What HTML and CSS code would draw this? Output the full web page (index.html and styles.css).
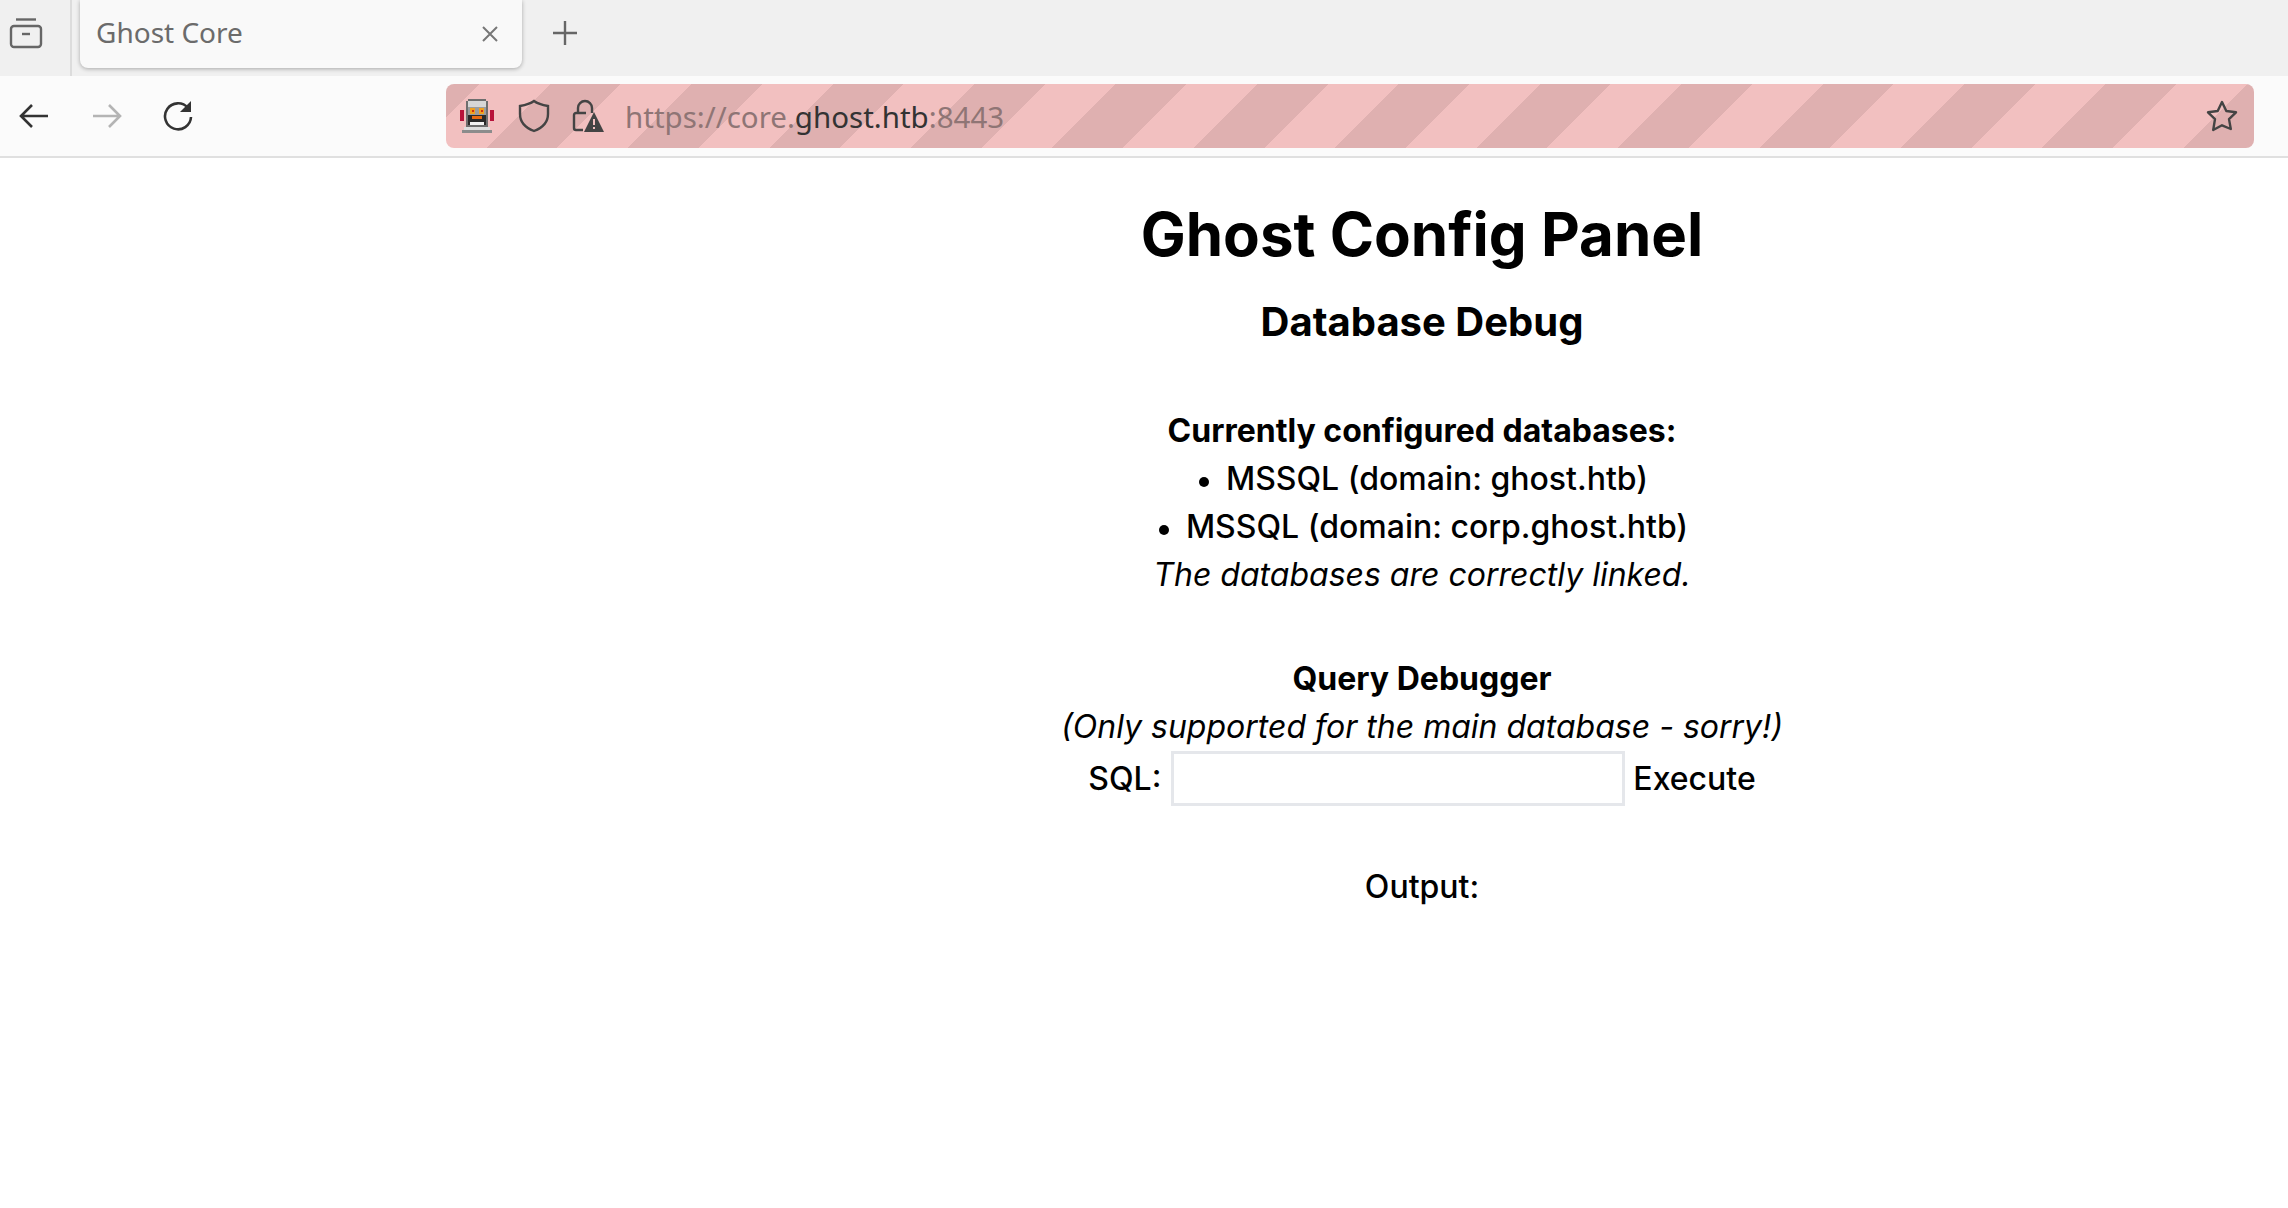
FILE: index.html
```html
<!DOCTYPE html>
<html lang="en">
  <head>
    <meta charset="UTF-8" />
    <title>Ghost Core</title>
    <link rel="stylesheet" href="styles.css">
  </head>
  <body>
    <div class="tabbar">
      <div class="tab-list">
        <svg width="34" height="32" viewBox="0 0 34 32" fill="none" stroke="#666" stroke-width="2.4">
          <path d="M7 2.500h20" />
          <rect x="2" y="9" width="30" height="21" rx="3" />
          <path d="M13 17h8" />
        </svg>
      </div>
      <div class="tab">
        <span class="tab-title">Ghost Core</span>
        <svg width="20" height="20" viewBox="0 0 20 20" fill="none" stroke="#777" stroke-width="2">
          <path d="M3 3l14 14M17 3L3 17" />
        </svg>
      </div>
      <svg class="new-tab" width="26" height="26" viewBox="0 0 26 26" fill="none" stroke="#666" stroke-width="2.4">
        <path d="M13 1v24M1 13h24" />
      </svg>
    </div>

    <div class="toolbar">
      <div class="nav-btn back">
        <svg width="30" height="26" viewBox="0 0 30 26" fill="none" stroke="#333" stroke-width="2.6">
          <path d="M29 13H3M13 2L2 13l11 11" />
        </svg>
      </div>
      <div class="nav-btn">
        <svg width="30" height="26" viewBox="0 0 30 26" fill="none" stroke="#b4b4b4" stroke-width="2.6">
          <path d="M1 13h26M17 2l11 11-11 11" />
        </svg>
      </div>
      <div class="nav-btn">
        <svg width="32" height="32" viewBox="0 0 32 32" fill="none" stroke="#333" stroke-width="2.6">
          <path d="M26 8A13 13 0 1 0 29 17" />
          <path d="M29 1v11H18z" fill="#333" stroke="none" />
        </svg>
      </div>
      <div class="urlbar">
        <svg class="url-robot" width="34" height="34" viewBox="0 0 34 34" shape-rendering="crispEdges">
          <rect x="0" y="11" width="4" height="11" fill="#b8123a" />
          <rect x="30" y="11" width="4" height="11" fill="#b8123a" />
          <rect x="8" y="0" width="18" height="2" fill="#6e6e6e" />
          <rect x="6" y="2" width="22" height="26" fill="#6e6e6e" />
          <rect x="8" y="2" width="18" height="6" fill="#d6d6d6" />
          <rect x="8" y="8" width="18" height="8" fill="#9c9c9c" />
          <rect x="10" y="9" width="5" height="6" fill="#f0a020" />
          <rect x="19" y="9" width="5" height="6" fill="#f0a020" />
          <rect x="12" y="11" width="2" height="2" fill="#d03010" />
          <rect x="21" y="11" width="2" height="2" fill="#d03010" />
          <rect x="8" y="16" width="18" height="10" fill="#2a2a2a" />
          <rect x="12" y="17" width="10" height="3" fill="#e86a10" />
          <rect x="10" y="23" width="14" height="3" fill="#f2f2f2" />
          <rect x="4" y="28" width="26" height="3" fill="#dedede" />
          <rect x="2" y="31" width="30" height="3" fill="#8c8c8c" />
        </svg>
        <svg class="url-shield" width="32" height="34" viewBox="0 0 32 34" fill="none" stroke="#444" stroke-width="2.4">
          <path d="M16 2c4 3 8 4 14 5v8c0 9-6 14-14 17C8 29 2 24 2 15V7c6-1 10-2 14-5z" />
        </svg>
        <svg class="url-lock" width="32" height="34" viewBox="0 0 32 34" fill="none" stroke="#444" stroke-width="2.4">
          <path d="M6 14V9a7 7 0 0 1 14 0v5" />
          <path d="M14 14H4a2 2 0 0 0-2 2v13a2 2 0 0 0 2 2h7" />
          <path d="M22 13L32 33H12z" fill="#444" stroke="none" />
          <path d="M22 20v6M22 28v2" stroke="#f2c0c0" stroke-width="2" />
        </svg>
        <span class="url-text">https://core.<b>ghost.htb</b>:8443</span>
        <svg class="url-star" width="32" height="32" viewBox="0 0 32 32" fill="none" stroke="#444" stroke-width="2.4" stroke-linejoin="round">
          <path d="M16 2l4.300 9 9.700 1.300-7 6.800 1.800 9.900L16 25.300 7.200 30 9 19.100 2 12.300 11.700 11z" />
        </svg>
      </div>
    </div>

    <main class="panel">
      <h1>Ghost Config Panel</h1>
      <h2>Database Debug</h2>

      <section class="databases">
        <strong>Currently configured databases:</strong>
        <ul>
          <li>MSSQL (domain: ghost.htb)</li>
          <li>MSSQL (domain: corp.ghost.htb)</li>
        </ul>
        <em>The databases are correctly linked.</em>
      </section>

      <section class="debugger">
        <strong>Query Debugger</strong>
        <br />
        <em>(Only supported for the main database - sorry!)</em>
        <form class="query-form" onsubmit="return false">
          <label for="sql">SQL:</label>
          <input id="sql" type="text" />
          <button type="submit">Execute</button>
        </form>
      </section>

      <section class="output">Output:</section>
    </main>
  </body>
</html>
```

FILE: styles.css
```css
* {
  box-sizing: border-box;
}

body {
  margin: 0;
  background: white;
  color: black;
  font-family: Inter, sans-serif;
  font-size: 32px;
  font-weight: 450;
  line-height: 48px;
}

.tabbar {
  height: 76px;
  background: #f0f0f0;
  display: flex;
  align-items: flex-start;
}

.tab-list {
  width: 72px;
  height: 76px;
  padding: 17px 0 0 9px;
  border-right: 2px solid #dcdcdc;
}

.tab-list svg,
.new-tab {
  display: block;
}

.tab {
  width: 442px;
  height: 68px;
  margin-left: 8px;
  padding: 0 22px 0 16px;
  background: #f9f9f9;
  border-radius: 0 0 8px 8px;
  box-shadow: 0 1px 4px rgba(0, 0, 0, 0.3);
  display: flex;
  justify-content: space-between;
  align-items: center;
  font-family: "Noto Sans", sans-serif;
  font-size: 28px;
  font-weight: 400;
  color: #6b6b6b;
}

.tab-title {
  margin-top: -4px;
}

.new-tab {
  margin: 20px 0 0 30px;
}

.toolbar {
  height: 82px;
  background: #fbfbfb;
  border-bottom: 2px solid #e0e0e0;
  display: flex;
  align-items: center;
}

.nav-btn {
  width: 71px;
  display: flex;
  justify-content: center;
}

.nav-btn.back {
  margin-left: -2px;
  margin-right: 2px;
}

.urlbar {
  width: 1808px;
  height: 64px;
  margin-left: 233px;
  padding: 0 16px 0 14px;
  border-radius: 8px;
  display: flex;
  align-items: center;
  background: repeating-linear-gradient(-45deg, #dfb0b0 0, #dfb0b0 50px, #f2c0c0 50px, #f2c0c0 100px);
}

.url-shield {
  margin-left: 24px;
}

.url-lock {
  margin-left: 22px;
}

.url-text {
  margin-left: 21px;
  margin-top: 2px;
  font-family: "Noto Sans", sans-serif;
  font-size: 29.5px;
  font-weight: 400;
  color: #8f7575;
}

.url-text b {
  font-weight: normal;
  color: #333;
}

.url-star {
  margin-left: auto;
}

.panel {
  padding-left: 556px;
  padding-top: 40px;
  text-align: center;
}

h1 {
  margin: 0;
  font-size: 60px;
  line-height: 72px;
  font-weight: 700;
}

h2 {
  margin: 22px 0 0;
  font-size: 40px;
  line-height: 60px;
  font-weight: 700;
}

strong {
  font-weight: 700;
}

.databases {
  margin-top: 55px;
}

ul {
  margin: 0;
  padding: 0;
  list-style: none;
}

li {
  padding-left: 3px;
}

li::before {
  content: "";
  display: inline-block;
  width: 10px;
  height: 10px;
  margin-right: 17px;
  border-radius: 50%;
  background: black;
  vertical-align: 3px;
}

.debugger {
  margin-top: 56px;
}

.query-form {
  display: flex;
  justify-content: center;
  align-items: center;
  height: 55px;
}

input {
  width: 454px;
  height: 55px;
  margin: 0 8px 0 10px;
  border: 3px solid #e5e7eb;
  background: white;
}

button {
  padding: 0;
  border: none;
  background: none;
  font: inherit;
  color: inherit;
}

.output {
  margin-top: 57px;
}
```
